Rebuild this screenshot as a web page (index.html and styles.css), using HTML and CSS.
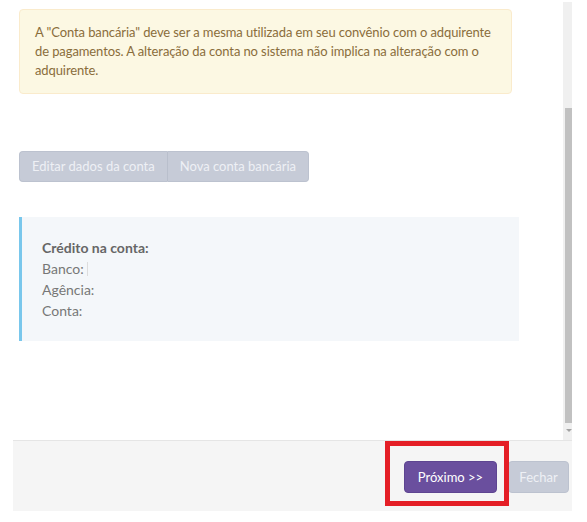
FILE: index.html
```html
<!DOCTYPE html>
<html>
<head>
    <title>Conta bancária</title>
    <link rel="stylesheet" href="styles.css">
</head>
<body>
<div class="modal">
    <div class="modal-body">
        <div class="content">
            <div class="alert">
                A "Conta bancária" deve ser a mesma utilizada em seu convênio com o adquirente
                de pagamentos. A alteração da conta no sistema não implica na alteração com o
                adquirente.
            </div>

            <div class="btn-group">
                <button class="btn btn-disabled">Editar dados da conta</button>
                <button class="btn btn-disabled">Nova conta bancária</button>
            </div>

            <div class="account-info">
                <strong>Crédito na conta:</strong>
                <div>Banco: <span class="empty-value"></span></div>
                <div>Agência:</div>
                <div>Conta:</div>
            </div>
        </div>
        <div class="scrollbar">
            <div class="scroll-track"></div>
            <div class="scroll-thumb"></div>
            <div class="scroll-arrow"></div>
        </div>
    </div>

    <div class="modal-footer">
        <button class="btn btn-primary">Próximo &gt;&gt;</button>
        <button class="btn btn-disabled">Fechar</button>
        <div class="highlight"></div>
    </div>
</div>
</body>
</html>
```

FILE: styles.css
```css
body {
    margin: 0;
    font-family: Lato, "Open Sans", sans-serif;
    font-size: 13px;
    color: #777777;
    background-color: #ffffff;
}
.modal {
    margin-left: 13px;
    width: 559px;
}
.modal-body {
    display: flex;
    height: 440px;
}
.content {
    flex: 1;
    padding: 9px 0 0 6px;
}
.alert {
    width: 471px;
    padding: 13px 5px 13px 15px;
    line-height: 19px;
    letter-spacing: -0.1px;
    color: #8a6d3b;
    background-color: #fcf8e3;
    border: 1px solid #faebcc;
    border-radius: 4px;
}
.btn-group {
    display: inline-flex;
    margin-top: 57px;
}
.btn {
    font-family: Lato, "Open Sans", sans-serif;
    font-size: 13px;
    line-height: 19px;
    padding: 5px 12px;
    border: 1px solid #bcc2cf;
    border-radius: 4px;
}
.btn-group .btn:first-child {
    border-radius: 4px 0 0 4px;
    border-right-color: #b9bfcc;
}
.btn-group .btn:last-child {
    border-radius: 0 4px 4px 0;
    border-left: none;
}
.btn-disabled {
    background-color: #c6cbd7;
    color: #eef0f5;
}
.btn-primary {
    background-color: #6a4f9e;
    border-color: #5e4591;
    color: #ffffff;
}
.account-info {
    margin-top: 35px;
    width: 457px;
    padding: 20px;
    line-height: 21px;
    font-size: 14px;
    background-color: #f4f7fa;
    border-left: 3px solid #79c7ec;
}
.account-info strong {
    display: block;
    color: #666666;
}
.empty-value {
    display: inline-block;
    width: 1px;
    height: 14px;
    vertical-align: -2px;
    background-color: #dddddd;
}
.scrollbar {
    position: relative;
    width: 9px;
    margin-top: 2px;
    background-color: #f0f0f0;
}
.scroll-thumb {
    position: absolute;
    left: 2px;
    right: 0;
    top: 106px;
    height: 315px;
    background-color: #c1c1c1;
}
.scroll-arrow {
    position: absolute;
    left: 3px;
    top: 427px;
    border-left: 3px solid transparent;
    border-right: 3px solid transparent;
    border-top: 3px solid #a3a3a3;
}
.modal-footer {
    position: relative;
    display: flex;
    justify-content: flex-end;
    gap: 11px;
    height: 50px;
    padding: 20px 3px 0 0;
    background-color: #f5f5f5;
    border-top: 1px solid #e5e5e5;
}
.modal-footer .btn {
    height: 32px;
    padding: 5px 0;
    text-align: center;
}
.modal-footer .btn-primary {
    width: 93px;
}
.modal-footer .btn-disabled {
    width: 61px;
}
.highlight {
    position: absolute;
    left: 372px;
    top: 0;
    width: 114px;
    height: 55px;
    border: 5px solid #e41e26;
}
```
